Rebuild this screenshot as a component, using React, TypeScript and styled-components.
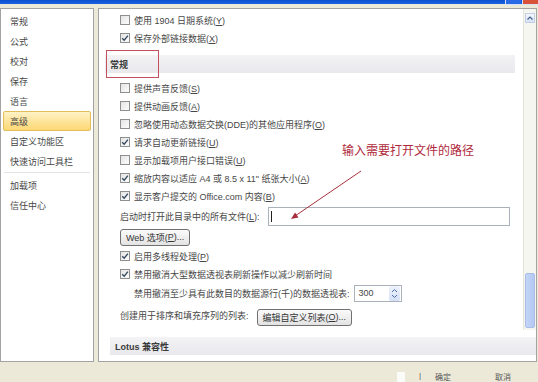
import React from 'react'
import styled, { createGlobalStyle } from 'styled-components'

const GlobalStyle = createGlobalStyle`
  html, body {
    margin: 0;
    padding: 0;
    background: #ece9d8;
  }
  body {
    font-family: "Liberation Sans", "Noto Sans CJK SC", sans-serif;
    font-size: 9px;
    color: #474747;
  }
  u {
    text-underline-offset: 1px;
  }
`

const Frame = styled.div`
  width: 538px;
  height: 382px;
  overflow: hidden;
  display: flex;
  flex-direction: column;
  background: #ece9d8;
`

const TitleBar = styled.div`
  height: 4px;
  background: linear-gradient(#0a4fd0, #1d63e0);
  display: flex;
  justify-content: flex-end;
  gap: 1px;
`

const WinButton = styled.div<{ $color: string }>`
  width: 15px;
  height: 4px;
  background: ${({ $color }) => $color};
  border-left: 1px solid #d6e2f8;
  border-bottom: 1px solid #d6e2f8;
`

const Body = styled.div`
  display: flex;
  gap: 4px;
  padding: 4px 1px 0 0;
  height: 354px;
`

const Sidebar = styled.div`
  width: 92px;
  border: 1px solid #a3a3a3;
  background: #fff;
  padding-top: 2px;
  display: flex;
  flex-direction: column;
`

const NavItem = styled.div<{ $active?: boolean }>`
  height: 20px;
  display: flex;
  align-items: center;
  margin: 0 2px;
  padding-left: 6px;
  box-sizing: border-box;
  border-radius: 2px;
  border: 1px solid ${({ $active }) => ($active ? '#e2bd5c' : 'transparent')};
  background: ${({ $active }) => ($active ? 'linear-gradient(#fff2c6, #fcd874)' : 'transparent')};
`

const NavSeparator = styled.div`
  height: 1px;
  margin: 1px 3px 2px;
  background: #e4e4e4;
`

const Panel = styled.div`
  flex: 1;
  border: 1px solid #a3a3a3;
  background: #fff;
  display: flex;
  flex-direction: column;
  position: relative;
`

const ScrollArea = styled.div`
  display: flex;
  height: 321px;
`

const Content = styled.div`
  flex: 1;
  padding-top: 2px;
  display: flex;
  flex-direction: column;
`

const Scrollbar = styled.div`
  width: 13px;
  background: #f4f6ef;
  border-left: 1px solid #e2e6da;
  display: flex;
  flex-direction: column;
  align-items: center;
  padding: 4px 0 2px;
  box-sizing: border-box;
`

const ScrollUp = styled.div`
  width: 10px;
  height: 10px;
  border: 1px solid #c3cfe6;
  background: linear-gradient(#f3f7ff, #d8e3f7);
  box-sizing: border-box;
  display: flex;
  align-items: center;
  justify-content: center;
`

const Thumb = styled.div`
  margin-top: auto;
  width: 10px;
  height: 55px;
  border: 1px solid #a9bde6;
  border-radius: 2px;
  background: linear-gradient(90deg, #c4d5f7, #b3c8f2);
  box-sizing: border-box;
`

const Row = styled.div<{ $indent?: number; $height?: number }>`
  display: flex;
  align-items: center;
  height: ${({ $height }) => $height ?? 18}px;
  padding-left: ${({ $indent }) => $indent ?? 21}px;
  gap: 4px;
  white-space: nowrap;
`

const Box = styled.span`
  width: 10px;
  height: 10px;
  flex: none;
  box-sizing: border-box;
  border: 1px solid #8e8f8f;
  background: linear-gradient(135deg, #e4e4e4, #fcfcfc);
  display: flex;
  align-items: center;
  justify-content: center;
`

const Band = styled.div<{ $top: number; $left: number; $right: number }>`
  position: relative;
  height: 18px;
  margin: ${({ $top, $right, $left }) => `${$top}px ${$right}px 6px ${$left}px`};
  padding-left: 5px;
  display: flex;
  align-items: center;
  background: linear-gradient(#f3f3f5, #e9e9ed);
  font-weight: bold;
  color: #3a3a3a;
`

const Highlight = styled.div`
  position: absolute;
  left: 1px;
  top: -5px;
  width: 53px;
  height: 28px;
  box-sizing: border-box;
  border: 1px solid #c4505c;
`

const PathInput = styled.div`
  margin-left: auto;
  margin-right: 13px;
  width: 242px;
  height: 19px;
  box-sizing: border-box;
  border: 1px solid #aab1bb;
  background: #fff;
  display: flex;
  align-items: center;
  padding-left: 2px;
`

const Caret = styled.span`
  width: 1px;
  height: 11px;
  background: #222;
`

const Button = styled.div<{ $offset?: number }>`
  height: 17px;
  padding: 0 5px;
  margin: ${({ $offset }) => ($offset ? `${$offset}px 0 0 ${$offset}px` : '0')};
  box-sizing: border-box;
  border: 1px solid #707070;
  border-radius: 3px;
  background: linear-gradient(#fbfbfb, #e3e3e3);
  display: flex;
  align-items: center;
  color: #353535;
`

const Spinner = styled.div`
  width: 48px;
  height: 17px;
  box-sizing: border-box;
  border: 1px solid #aab1bb;
  display: flex;
  align-items: center;
  justify-content: space-between;
  padding-left: 4px;
`

const SpinButtons = styled.div`
  width: 11px;
  height: 15px;
  margin-right: 1px;
  background: linear-gradient(#eef3fc, #d5e0f5);
  border-radius: 2px;
  display: flex;
  align-items: center;
  justify-content: center;
`

const Note = styled.div`
  position: absolute;
  left: 243px;
  top: 132px;
  font-family: "Noto Sans CJK SC", sans-serif;
  font-size: 12px;
  color: #b02a3c;
  white-space: nowrap;
`

const Arrow = styled.svg`
  position: absolute;
  left: 190px;
  top: 151px;
`

const Footer = styled.div`
  flex: 1;
  display: flex;
  align-items: flex-start;
  padding: 9px 0 0 397px;
  font-size: 8px;
  color: #555;
`

const FooterMark = styled.span`
  width: 8px;
  height: 12px;
  margin-top: 1px;
  background: #fbfbf8;
`

const FooterText = styled.span<{ $gap: number }>`
  margin-left: ${({ $gap }) => $gap}px;
`

const Check = () => (
  <svg width="8" height="8" viewBox="0 0 8 8">
    <path d="M1.2 4.2 L3.2 6.2 L6.9 1.6" fill="none" stroke="#33485e" strokeWidth="1.3" />
  </svg>
)

const Option: React.FC<{ checked?: boolean; children: React.ReactNode }> = ({ checked, children }) => (
  <Row>
    <Box>{checked && <Check />}</Box>
    <span>{children}</span>
  </Row>
)

const navItems = ['常规', '公式', '校对', '保存', '语言', '高级', '自定义功能区', '快速访问工具栏']

const App: React.FC = () => (
  <Frame>
    <GlobalStyle />
    <TitleBar>
      <WinButton $color="#2a6ae6" />
      <WinButton $color="#d9533a" />
    </TitleBar>
    <Body>
      <Sidebar>
        {navItems.map((item) => (
          <NavItem key={item} $active={item === '高级'}>
            {item}
          </NavItem>
        ))}
        <NavSeparator />
        <NavItem>加载项</NavItem>
        <NavItem>信任中心</NavItem>
      </Sidebar>
      <Panel>
        <ScrollArea>
          <Content>
            <Option>
              使用 1904 日期系统(<u>Y</u>)
            </Option>
            <Option checked>
              保存外部链接数据(<u>X</u>)
            </Option>
            <Band $top={8} $left={6} $right={8}>
              常规
              <Highlight />
            </Band>
            <Option>
              提供声音反馈(<u>S</u>)
            </Option>
            <Option>
              提供动画反馈(<u>A</u>)
            </Option>
            <Option>
              忽略使用动态数据交换(DDE)的其他应用程序(<u>O</u>)
            </Option>
            <Option checked>
              请求自动更新链接(<u>U</u>)
            </Option>
            <Option>
              显示加载项用户接口错误(<u>U</u>)
            </Option>
            <Option checked>
              缩放内容以适应 A4 或 8.5 x 11" 纸张大小(<u>A</u>)
            </Option>
            <Option checked>
              显示客户提交的 Office.com 内容(<u>B</u>)
            </Option>
            <Row $height={22}>
              <span>
                启动时打开此目录中的所有文件(<u>L</u>):
              </span>
              <PathInput>
                <Caret />
              </PathInput>
            </Row>
            <Row $height={20}>
              <Button>
                Web 选项(<u>P</u>)...
              </Button>
            </Row>
            <Option checked>
              启用多线程处理(<u>P</u>)
            </Option>
            <Option checked>禁用撤消大型数据透视表刷新操作以减少刷新时间</Option>
            <Row $indent={35} $height={20}>
              <span>禁用撤消至少具有此数目的数据源行(千)的数据透视表:</span>
              <Spinner>
                <span>300</span>
                <SpinButtons>
                  <svg width="7" height="11" viewBox="0 0 7 11">
                    <path d="M1 4 L3.5 1.5 L6 4 M1 7 L3.5 9.5 L6 7" fill="none" stroke="#4a6ea8" strokeWidth="1" />
                  </svg>
                </SpinButtons>
              </Spinner>
            </Row>
            <Row $height={24}>
              <span>创建用于排序和填充序列的列表:</span>
              <Button $offset={4}>
                编辑自定义列表(<u>O</u>)...
              </Button>
            </Row>
          </Content>
          <Scrollbar>
            <ScrollUp>
              <svg width="6" height="4" viewBox="0 0 6 4">
                <path d="M0.5 3.5 L3 1 L5.5 3.5" fill="none" stroke="#4a5f85" strokeWidth="1.2" />
              </svg>
            </ScrollUp>
            <Thumb />
          </Scrollbar>
        </ScrollArea>
        <Band $top={7} $left={11} $right={0}>
          Lotus 兼容性
        </Band>
        <Note>输入需要打开文件的路径</Note>
        <Arrow width="75" height="62" viewBox="0 0 75 62">
          <line x1="72" y1="11" x2="6" y2="56" stroke="#a8303e" strokeWidth="1" />
          <polygon points="2,59 9.5,57.5 6.1,52.5" fill="#a8303e" />
        </Arrow>
      </Panel>
    </Body>
    <Footer>
      <FooterMark />
      <FooterText $gap={14}>|</FooterText>
      <FooterText $gap={14}>确定</FooterText>
      <FooterText $gap={44}>取消</FooterText>
    </Footer>
  </Frame>
)

export default App
